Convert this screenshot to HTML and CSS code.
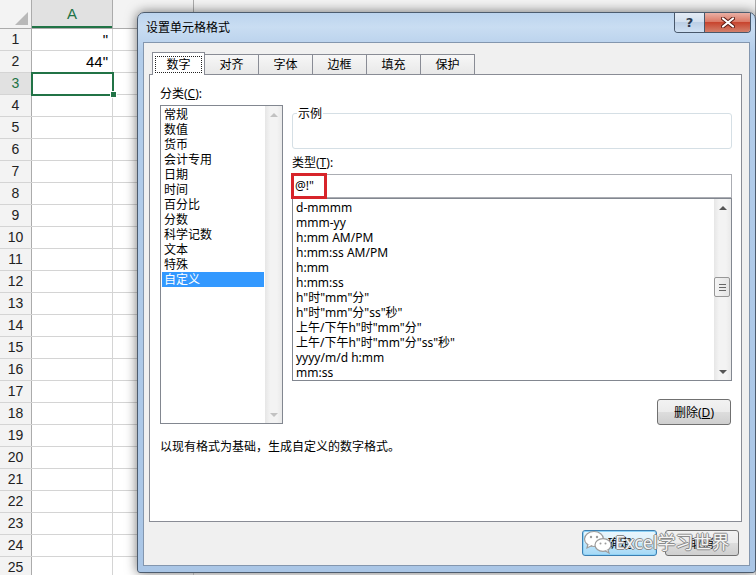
FILE: index.html
```html
<!DOCTYPE html>
<html lang="zh-CN">
<head>
  <meta charset="UTF-8" />
  <title>设置单元格格式</title>
  <link rel="stylesheet" href="styles.css">
</head>
<body>

  <!-- worksheet behind the dialog -->
  <div class="sheet">
    <div class="row head">
      <div class="rh corner"></div>
      <div class="cell colsel">A</div>
      <div class="cell"></div>
      <div class="cell rest"></div>
    </div>
    <div class="row"><div class="rh">1</div><div class="cell">"</div><div class="cell"></div><div class="cell rest"></div></div>
    <div class="row"><div class="rh">2</div><div class="cell">44"</div><div class="cell"></div><div class="cell rest"></div></div>
    <div class="row rowsel"><div class="rh">3</div><div class="cell sel"></div><div class="cell"></div><div class="cell rest"></div></div>
    <div class="row"><div class="rh">4</div><div class="cell"></div><div class="cell"></div><div class="cell rest"></div></div>
    <div class="row"><div class="rh">5</div><div class="cell"></div><div class="cell"></div><div class="cell rest"></div></div>
    <div class="row"><div class="rh">6</div><div class="cell"></div><div class="cell"></div><div class="cell rest"></div></div>
    <div class="row"><div class="rh">7</div><div class="cell"></div><div class="cell"></div><div class="cell rest"></div></div>
    <div class="row"><div class="rh">8</div><div class="cell"></div><div class="cell"></div><div class="cell rest"></div></div>
    <div class="row"><div class="rh">9</div><div class="cell"></div><div class="cell"></div><div class="cell rest"></div></div>
    <div class="row"><div class="rh">10</div><div class="cell"></div><div class="cell"></div><div class="cell rest"></div></div>
    <div class="row"><div class="rh">11</div><div class="cell"></div><div class="cell"></div><div class="cell rest"></div></div>
    <div class="row"><div class="rh">12</div><div class="cell"></div><div class="cell"></div><div class="cell rest"></div></div>
    <div class="row"><div class="rh">13</div><div class="cell"></div><div class="cell"></div><div class="cell rest"></div></div>
    <div class="row"><div class="rh">14</div><div class="cell"></div><div class="cell"></div><div class="cell rest"></div></div>
    <div class="row"><div class="rh">15</div><div class="cell"></div><div class="cell"></div><div class="cell rest"></div></div>
    <div class="row"><div class="rh">16</div><div class="cell"></div><div class="cell"></div><div class="cell rest"></div></div>
    <div class="row"><div class="rh">17</div><div class="cell"></div><div class="cell"></div><div class="cell rest"></div></div>
    <div class="row"><div class="rh">18</div><div class="cell"></div><div class="cell"></div><div class="cell rest"></div></div>
    <div class="row"><div class="rh">19</div><div class="cell"></div><div class="cell"></div><div class="cell rest"></div></div>
    <div class="row"><div class="rh">20</div><div class="cell"></div><div class="cell"></div><div class="cell rest"></div></div>
    <div class="row"><div class="rh">21</div><div class="cell"></div><div class="cell"></div><div class="cell rest"></div></div>
    <div class="row"><div class="rh">22</div><div class="cell"></div><div class="cell"></div><div class="cell rest"></div></div>
    <div class="row"><div class="rh">23</div><div class="cell"></div><div class="cell"></div><div class="cell rest"></div></div>
    <div class="row"><div class="rh">24</div><div class="cell"></div><div class="cell"></div><div class="cell rest"></div></div>
    <div class="row"><div class="rh">25</div><div class="cell"></div><div class="cell"></div><div class="cell rest"></div></div>
  </div>

  <!-- Format Cells dialog -->
  <div class="dialog">
    <div class="titlebar">
      <span class="title">设置单元格格式</span>
      <div class="caption">
        <div class="cap help">?</div>
        <div class="cap close">
          <svg width="14" height="11" viewBox="0 0 14 11">
            <path d="M2 1.5 L12 9.5 M12 1.5 L2 9.5" stroke="#5a1a12" stroke-width="4" stroke-linecap="round"/>
            <path d="M2 1.5 L12 9.5 M12 1.5 L2 9.5" stroke="#fff" stroke-width="2.2" stroke-linecap="round"/>
          </svg>
        </div>
      </div>
    </div>

    <div class="client">
      <div class="tabs">
        <div class="tab active"><span class="focus">数字</span></div>
        <div class="tab">对齐</div>
        <div class="tab">字体</div>
        <div class="tab">边框</div>
        <div class="tab">填充</div>
        <div class="tab">保护</div>
      </div>

      <div class="panel">
        <div class="cols">
          <div class="col-left">
            <div class="label">分类(<u>C</u>):</div>
            <div class="listbox cat">
              <ul class="items">
                <li>常规</li>
                <li>数值</li>
                <li>货币</li>
                <li>会计专用</li>
                <li>日期</li>
                <li>时间</li>
                <li>百分比</li>
                <li>分数</li>
                <li>科学记数</li>
                <li>文本</li>
                <li>特殊</li>
                <li class="selected">自定义</li>
              </ul>
              <div class="vscroll disabled">
                <span class="arr up"></span>
                <span class="arr down"></span>
              </div>
            </div>
          </div>

          <div class="col-right">
            <div class="sample"><span class="legend">示例</span></div>
            <div class="label type-label">类型(<u>T</u>):</div>
            <div class="typebox">@!"<span class="mark"></span></div>
            <div class="listbox fmt">
              <ul class="items">
                <li>d-mmmm</li>
                <li>mmm-yy</li>
                <li>h:mm AM/PM</li>
                <li>h:mm:ss AM/PM</li>
                <li>h:mm</li>
                <li>h:mm:ss</li>
                <li>h"时"mm"分"</li>
                <li>h"时"mm"分"ss"秒"</li>
                <li>上午/下午h"时"mm"分"</li>
                <li>上午/下午h"时"mm"分"ss"秒"</li>
                <li>yyyy/m/d h:mm</li>
                <li>mm:ss</li>
              </ul>
              <div class="vscroll">
                <span class="arr up"></span>
                <span class="thumb"><span class="grip"></span></span>
                <span class="arr down"></span>
              </div>
            </div>
            <div class="actions">
              <button class="btn">删除(<u>D</u>)</button>
            </div>
          </div>
        </div>
        <p class="desc">以现有格式为基础，生成自定义的数字格式。</p>
      </div>

      <div class="footer">
        <button class="btn default">确定</button>
        <button class="btn">取消</button>
      </div>

      <div class="watermark">
        <svg width="30" height="26" viewBox="0 0 30 26">
          <ellipse cx="11" cy="10" rx="9.5" ry="7.5" fill="#fff" stroke="#9c9c9c" stroke-width="1.2"/>
          <path d="M5 15 L4 19 L9 16.5" fill="#fff" stroke="#9c9c9c" stroke-width="1.2"/>
          <ellipse cx="20" cy="16" rx="8" ry="6.3" fill="#fff" stroke="#9c9c9c" stroke-width="1.2"/>
          <path d="M25 21 L26 24 L22 21.8" fill="#fff" stroke="#9c9c9c" stroke-width="1.2"/>
          <circle cx="8" cy="8" r="1.2" fill="#9c9c9c"/>
          <circle cx="14" cy="8" r="1.2" fill="#9c9c9c"/>
          <circle cx="17.5" cy="14.5" r="1" fill="#9c9c9c"/>
          <circle cx="22.5" cy="14.5" r="1" fill="#9c9c9c"/>
        </svg>
        <span class="wm-text">Excel学习世界</span>
      </div>
    </div>
  </div>

</body>
</html>
```

FILE: styles.css
```css
body {
  margin: 0;
  width: 756px;
  height: 575px;
  overflow: hidden;
  position: relative;
  background: #fff;
  font-family: "Noto Sans", "Noto Sans CJK SC", sans-serif;
}

/* worksheet */
.sheet {
  font-family: "Liberation Sans", Arial, sans-serif;
  font-size: 15px;
  color: #000;
}

.row {
  display: flex;
  height: 22px;
  box-sizing: border-box;
  border-bottom: 1px solid #d4d4d4;
}

.row.head {
  height: 29px;
  border-bottom: 1px solid #ababab;
  background: #f3f3f3;
}

.rh {
  width: 32px;
  flex: none;
  box-sizing: border-box;
  border-right: 1px solid #ababab;
  background: #f3f3f3;
  text-align: center;
  font-size: 14px;
  line-height: 21px;
  color: #222;
}

.cell {
  width: 81px;
  flex: none;
  box-sizing: border-box;
  border-right: 1px solid #d4d4d4;
  line-height: 21px;
  text-align: right;
  padding-right: 4px;
}

.cell.rest {
  flex: 1;
}

.head .cell {
  text-align: center;
  padding-right: 0;
  line-height: 28px;
  color: #444;
  border-right-color: #ababab;
}

.head .colsel {
  background: #e1e1e1;
  color: #217346;
  box-shadow: inset 0 -2px 0 #217346;
}

.corner {
  position: relative;
}

.corner::after {
  content: "";
  position: absolute;
  right: 3px;
  bottom: 3px;
  border-left: 13px solid transparent;
  border-bottom: 13px solid #b9b9b9;
}

.rowsel .rh {
  background: #e1e1e1;
  color: #217346;
}

.sel {
  position: relative;
}

.sel::after {
  content: "";
  position: absolute;
  left: -1px;
  top: -1px;
  width: 83px;
  height: 24px;
  box-sizing: border-box;
  border: 2px solid #217346;
}

.sel::before {
  content: "";
  position: absolute;
  right: -5px;
  bottom: -4px;
  width: 5px;
  height: 5px;
  background: #217346;
  border: 1px solid #fff;
  z-index: 2;
}

/* dialog window */
.dialog {
  position: absolute;
  left: 137px;
  top: 12px;
  width: 619px;
  height: 561px;
  box-sizing: border-box;
  padding: 0 5px 5px;
  border: 1px solid #4d5c6e;
  border-radius: 7px 7px 3px 3px;
  background: linear-gradient(180deg, #bcd4ee 0, #c9ddf2 14px, #b3cdea 40px, #aac6e6 100%);
  box-shadow: 0 0 12px rgba(0, 0, 0, 0.55);
  font-size: 12px;
  color: #000;
}

.titlebar {
  display: flex;
  height: 29px;
}

.title {
  padding: 6px 0 0 3px;
  line-height: 16px;
  font-family: "Noto Sans CJK SC", sans-serif;
}

.caption {
  display: flex;
  align-self: flex-start;
  margin-left: auto;
  margin-right: -1px;
  height: 19px;
  border: 1px solid #48586b;
  border-top: none;
  border-radius: 0 0 4px 4px;
  overflow: hidden;
}

.cap {
  display: flex;
  align-items: center;
  justify-content: center;
}

.cap.help {
  width: 29px;
  border-right: 1px solid #48586b;
  background: linear-gradient(#e4ecf6, #d1dfee 50%, #bccfe5 50%, #cfe0f2);
  font-family: "DejaVu Sans", sans-serif;
  font-size: 13px;
  font-weight: bold;
  color: #2a3a4e;
}

.cap.close {
  width: 45px;
  background: linear-gradient(#eab0a5, #db7a67 45%, #c8452f 50%, #d3806b);
}

.client {
  position: relative;
  height: 524px;
  box-sizing: border-box;
  background: #f0f0f0;
  border: 1px solid #8396ae;
}

/* tabs */
.tabs {
  display: flex;
  align-items: flex-end;
  height: 22px;
  margin: 9px 0 0 8px;
  position: relative;
  z-index: 1;
}

.tab {
  width: 55px;
  height: 20px;
  box-sizing: border-box;
  margin-left: -1px;
  border: 1px solid #898c95;
  border-bottom: none;
  background: linear-gradient(#f7f7f7, #e8e8e8);
  text-align: center;
  line-height: 19px;
}

.tab:first-child {
  margin-left: 0;
}

.tab.active {
  width: 53px;
  height: 23px;
  margin-bottom: -1px;
  background: #fff;
  position: relative;
}

.focus {
  display: block;
  margin: 3px 2px 0;
  height: 15px;
  line-height: 15px;
  border: 1px dotted #222;
}

.panel {
  height: 448px;
  box-sizing: border-box;
  margin: 0 7px 0 5px;
  padding: 11px 9px 0 10px;
  border: 1px solid #898c95;
  background: #fff;
}

.cols {
  display: flex;
  gap: 9px;
}

.col-left {
  width: 123px;
}

.col-right {
  width: 440px;
}

.label {
  line-height: 15px;
  margin-bottom: 4px;
}

.type-label {
  margin-top: 6px;
}

/* list boxes */
.listbox {
  display: flex;
  box-sizing: border-box;
  border: 1px solid #828790;
  background: #fff;
}

.listbox.cat {
  height: 319px;
}

.listbox.fmt {
  height: 183px;
}

.items {
  flex: 1;
  list-style: none;
  margin: 0;
  padding: 1px 1px 0;
  overflow: hidden;
}

.items li {
  height: 15px;
  line-height: 15px;
  padding-left: 2px;
  white-space: nowrap;
}

.items li.selected {
  background: #3399ff;
  color: #fff;
}

.vscroll {
  width: 17px;
  flex: none;
  display: flex;
  flex-direction: column;
  background: linear-gradient(90deg, #e6e6e6, #f3f3f3 30%, #f3f3f3 70%, #e9e9e9);
}

.arr {
  height: 17px;
  flex: none;
  display: flex;
  align-items: center;
  justify-content: center;
}

.arr::before {
  content: "";
  border-left: 4px solid transparent;
  border-right: 4px solid transparent;
}

.arr.up::before {
  border-bottom: 4px solid #555;
}

.arr.down {
  margin-top: auto;
}

.arr.down::before {
  border-top: 4px solid #555;
}

.disabled .arr.up::before {
  border-bottom-color: #c2c2c2;
}

.disabled .arr.down::before {
  border-top-color: #c2c2c2;
}

.thumb {
  height: 20px;
  margin: 61px 1px 0 0;
  box-sizing: border-box;
  border: 1px solid #979797;
  border-radius: 2px;
  background: linear-gradient(90deg, #f4f4f4, #e4e4e4);
  display: flex;
  align-items: center;
  justify-content: center;
}

.grip {
  width: 7px;
  height: 7px;
  background: repeating-linear-gradient(#666 0 1px, transparent 1px 3px);
}

/* sample group */
.sample {
  position: relative;
  height: 36px;
  box-sizing: border-box;
  margin-top: 27px;
  border: 1px solid #d5dfe5;
  border-radius: 3px;
}

.legend {
  position: absolute;
  left: 4px;
  top: -8px;
  padding: 0 1px;
  line-height: 15px;
  background: #fff;
}

.typebox {
  position: relative;
  height: 24px;
  box-sizing: border-box;
  padding-left: 2px;
  border: 1px solid #abadb3;
  line-height: 22px;
}

/* red annotation box */
.mark {
  position: absolute;
  left: -2px;
  top: -2px;
  width: 36px;
  height: 26px;
  box-sizing: border-box;
  border: 3px solid #d7242a;
}

.actions {
  display: flex;
  justify-content: flex-end;
  margin-top: 18px;
  padding-right: 1px;
}

.btn {
  width: 74px;
  height: 26px;
  padding: 0;
  border: 1px solid #707070;
  border-radius: 3px;
  background: linear-gradient(#f2f2f2, #ebebeb 50%, #dddddd 50%, #cfcfcf);
  font: inherit;
  font-size: 12px;
  color: #000;
}

.desc {
  margin: 14px 0 0;
  line-height: 15px;
}

.footer {
  display: flex;
  justify-content: flex-end;
  gap: 8px;
  margin: 8px 10px 0 0;
}

.btn.default {
  width: 75px;
  border-color: #3c7fb1;
  background: linear-gradient(#eaf6fd, #d9f0fc 50%, #bee6fd 50%, #a7d9f5);
  box-shadow: inset 0 0 0 1px #8fd3f7;
}

/* watermark over the buttons */
.watermark {
  position: absolute;
  left: 439px;
  top: 486px;
  display: flex;
  align-items: center;
  gap: 2px;
}

.wm-text {
  font-family: "Noto Sans", "Noto Sans CJK SC", sans-serif;
  font-size: 18px;
  line-height: 24px;
  color: rgba(255, 255, 255, 0.92);
  text-shadow: 1px 0 0 #8a8a8a, -1px 0 0 #8a8a8a, 0 1px 0 #8a8a8a, 0 -1px 0 #8a8a8a;
}
```
